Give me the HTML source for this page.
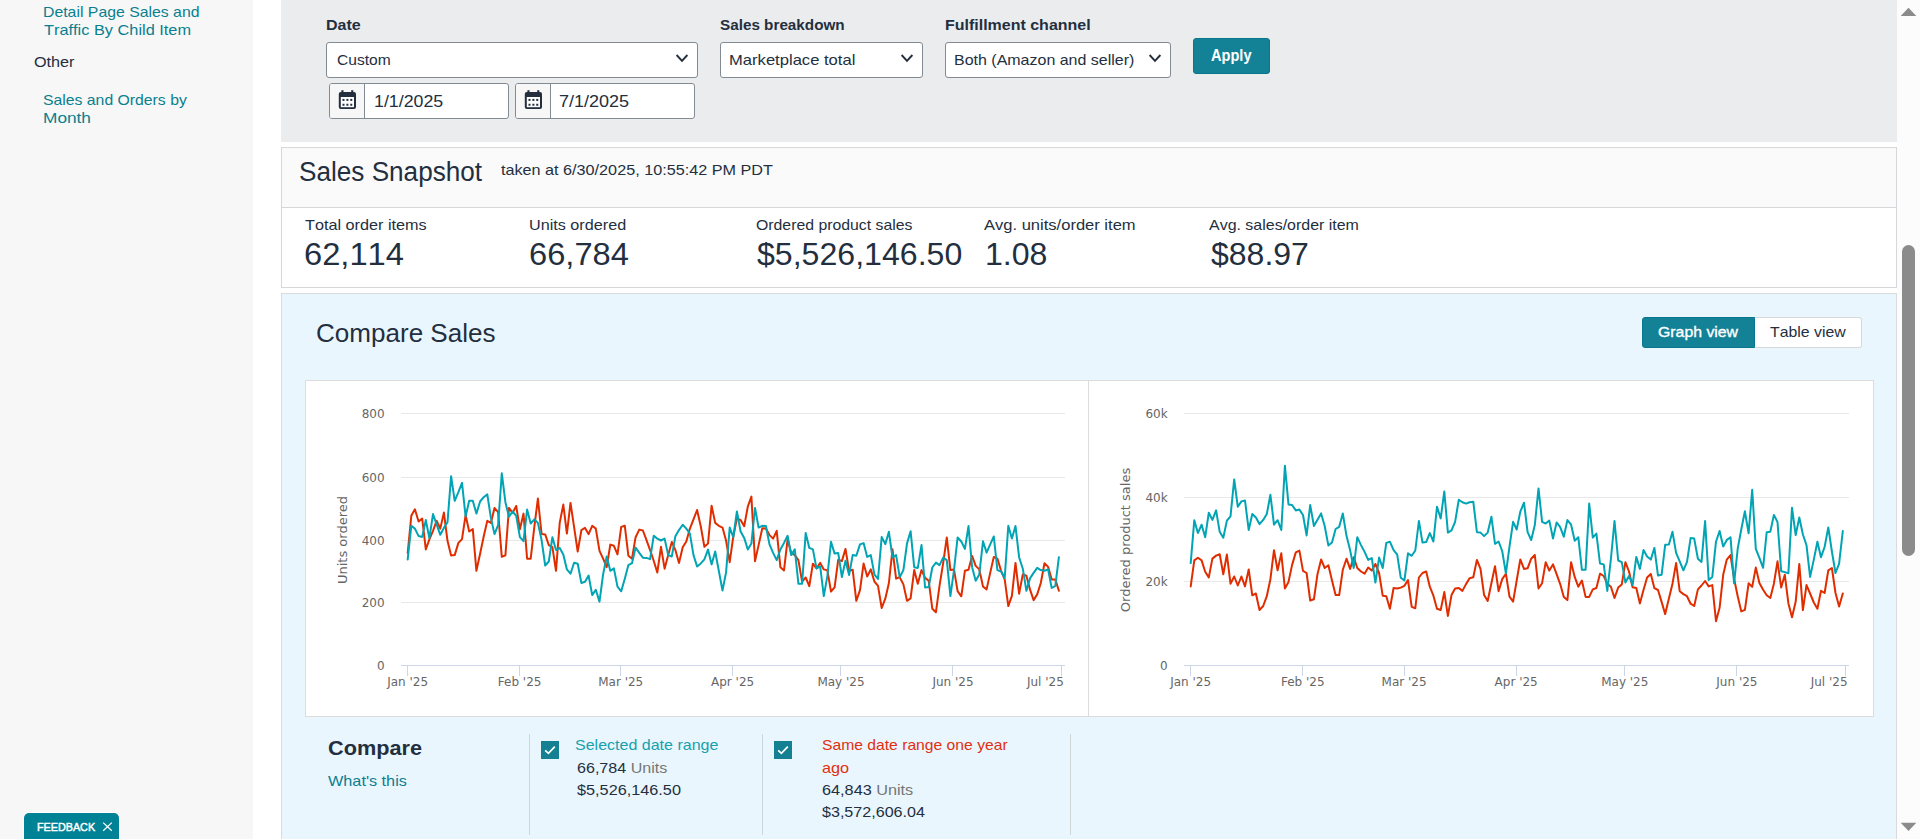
<!DOCTYPE html>
<html lang="en">
<head>
<meta charset="utf-8">
<title>Sales Dashboard</title>
<style>
*{box-sizing:border-box;margin:0;padding:0}
html,body{width:1920px;height:839px;overflow:hidden;background:#fff}
body{font-family:"Liberation Sans",sans-serif;color:#232f3e;font-size:15px;position:relative}
.t{position:absolute;white-space:nowrap;line-height:18px;font-size:15px;transform-origin:0 0;font-kerning:none}
#side{position:absolute;left:0;top:0;width:253px;height:839px;background:#f7f7f7}
.nav{color:#0a7f8f}
#filters{position:absolute;left:281px;top:0;width:1616px;height:141.6px;background:#ebecee}
.lbl{font-weight:bold;font-size:15.5px;margin-top:.6px}
.sel{position:absolute;top:42px;height:36px;background:#fff;border:1px solid #828b94;border-radius:3px}
.sel svg{position:absolute;right:7px;top:10px}
.dgrp{position:absolute;top:83px;height:36px;border:1px solid #828b94;border-radius:3px;background:#fff;overflow:hidden}
.dgrp .ic{position:absolute;left:0;top:0;width:35px;height:34px;background:#f7f7f7;border-right:1px solid #828b94}
.dgrp .ic svg{position:absolute;left:8px;top:6px}
#apply{position:absolute;left:1193px;top:38px;width:77px;height:36px;background:#148296;border:1px solid #06778c;border-radius:3px}
#snap{position:absolute;left:281px;top:147px;width:1616px;height:141px;border:1px solid #d5d7db;background:#fff}
#snaphd{position:absolute;left:0;top:0;width:1614px;height:60px;background:#fafafa;border-bottom:1px solid #d5d7db}
.mv{font-size:31px;line-height:38px}
#cmp{position:absolute;left:281px;top:293px;width:1616px;height:560px;border:1px solid #dadbdc;background:#eaf6fe}
#charts{position:absolute;left:305px;top:380px;width:1569px;height:337px;border:1px solid #dcdcdc;background:#fff}
#charts svg{position:absolute;left:-1px;top:-1px;display:block}
#tg1{position:absolute;left:1642px;top:317px;width:113px;height:31px;background:#148296;border:1px solid #06778c;border-radius:3px 0 0 3px}
#tg2{position:absolute;left:1755px;top:317px;width:107px;height:31px;background:#fff;border:1px solid #d5d9d9;border-left:0;border-radius:0 3px 3px 0}
.vd{position:absolute;top:734px;width:1px;height:101px;background:#cfd6da}
.cb{position:absolute;top:741px;width:18px;height:18px;background:#148092}
.cb svg{position:absolute;left:0;top:0}
#fb{position:absolute;left:24px;top:813px;width:95px;height:30px;background:#008296;border-radius:5px 5px 0 0;box-shadow:0 0 0 1px #fff}
#scroll{position:absolute;left:1897px;top:0;width:23px;height:839px;background:#fcfcfc}
#thumb{position:absolute;left:5px;top:245px;width:13px;height:310px;background:#8b8b8b;border-radius:7px}
.arr{position:absolute;left:6px;width:0;height:0;border-left:5.5px solid transparent;border-right:5.5px solid transparent}
</style>
</head>
<body>
<div id="side"></div>
<div id="filters"></div>
<div class="sel" style="left:326px;width:372px"><svg width="16" height="12" viewBox="0 0 16 12"><path d="M2.6 2 L8 7.9 L13.4 2" fill="none" stroke="#232f3e" stroke-width="1.9"/></svg></div>
<div class="sel" style="left:720px;width:203px"><svg width="16" height="12" viewBox="0 0 16 12"><path d="M2.6 2 L8 7.9 L13.4 2" fill="none" stroke="#232f3e" stroke-width="1.9"/></svg></div>
<div class="sel" style="left:945px;width:226px"><svg width="16" height="12" viewBox="0 0 16 12"><path d="M2.6 2 L8 7.9 L13.4 2" fill="none" stroke="#232f3e" stroke-width="1.9"/></svg></div>
<div class="dgrp" style="left:329px;width:180px"><div class="ic"><svg width="19" height="20" viewBox="0 0 19 20"><g fill="#232f3e"><rect x="3.4" y="0.2" width="2.1" height="3"/><rect x="13.2" y="0.2" width="2.1" height="3"/><rect x="0.8" y="2" width="17.2" height="17" rx="2"/></g><rect x="2.8" y="7" width="13.2" height="10.2" fill="#fff"/><g fill="#232f3e"><rect x="4.5" y="8.9" width="2" height="2"/><rect x="8.4" y="8.9" width="2" height="2"/><rect x="12.25" y="8.9" width="2" height="2"/><rect x="4.5" y="13.75" width="2" height="2"/><rect x="8.4" y="13.75" width="2" height="2"/><rect x="12.25" y="13.75" width="2" height="2"/></g></svg></div></div>
<div class="dgrp" style="left:515px;width:180px"><div class="ic"><svg width="19" height="20" viewBox="0 0 19 20"><g fill="#232f3e"><rect x="3.4" y="0.2" width="2.1" height="3"/><rect x="13.2" y="0.2" width="2.1" height="3"/><rect x="0.8" y="2" width="17.2" height="17" rx="2"/></g><rect x="2.8" y="7" width="13.2" height="10.2" fill="#fff"/><g fill="#232f3e"><rect x="4.5" y="8.9" width="2" height="2"/><rect x="8.4" y="8.9" width="2" height="2"/><rect x="12.25" y="8.9" width="2" height="2"/><rect x="4.5" y="13.75" width="2" height="2"/><rect x="8.4" y="13.75" width="2" height="2"/><rect x="12.25" y="13.75" width="2" height="2"/></g></svg></div></div>
<div id="apply"></div>
<div id="snap"><div id="snaphd"></div></div>
<div id="cmp"></div>
<div id="tg1"></div><div id="tg2"></div>
<div id="charts"><svg width="1569" height="337" viewBox="305 380 1569 337" style="font-family:'DejaVu Sans',sans-serif;font-size:12px;fill:#666666">
<rect x="401" y="413" width="664" height="1" fill="#e8e8e8"/>
<rect x="401" y="477" width="664" height="1" fill="#e8e8e8"/>
<rect x="401" y="540" width="664" height="1" fill="#e8e8e8"/>
<rect x="401" y="602" width="664" height="1" fill="#e8e8e8"/>
<rect x="401" y="665" width="664" height="1" fill="#ccd6eb"/>
<rect x="407" y="665" width="1" height="11" fill="#ccd6eb"/>
<text x="407.6" y="686" text-anchor="middle">Jan '25</text>
<rect x="519" y="665" width="1" height="11" fill="#ccd6eb"/>
<text x="519.6" y="686" text-anchor="middle">Feb '25</text>
<rect x="620" y="665" width="1" height="11" fill="#ccd6eb"/>
<text x="620.7" y="686" text-anchor="middle">Mar '25</text>
<rect x="732" y="665" width="1" height="11" fill="#ccd6eb"/>
<text x="732.6" y="686" text-anchor="middle">Apr '25</text>
<rect x="840" y="665" width="1" height="11" fill="#ccd6eb"/>
<text x="841.0" y="686" text-anchor="middle">May '25</text>
<rect x="952" y="665" width="1" height="11" fill="#ccd6eb"/>
<text x="953.0" y="686" text-anchor="middle">Jun '25</text>
<rect x="1061" y="665" width="1" height="11" fill="#ccd6eb"/>
<text x="1063.8" y="686" text-anchor="end">Jul '25</text>
<text x="384.6" y="417.8" text-anchor="end">800</text>
<text x="384.6" y="481.8" text-anchor="end">600</text>
<text x="384.6" y="544.8" text-anchor="end">400</text>
<text x="384.6" y="606.8" text-anchor="end">200</text>
<text x="384.6" y="669.8" text-anchor="end">0</text>
<text transform="translate(347.3,540) rotate(-90)" text-anchor="middle" style="font-size:13px">Units ordered</text>
<path d="M407.7 553.0 L411.3 515.8 L414.9 509.3 L418.6 521.5 L422.2 518.6 L425.8 549.4 L429.4 539.4 L433.0 530.8 L436.6 520.8 L440.3 528.6 L443.9 512.6 L447.5 540.8 L451.1 555.4 L454.7 555.1 L458.4 542.9 L462.0 539.1 L465.6 515.1 L469.2 531.5 L472.8 529.1 L476.4 570.8 L480.1 553.7 L483.7 536.5 L487.3 520.8 L490.9 522.9 L494.5 507.9 L498.1 512.2 L501.8 556.8 L505.4 555.4 L509.0 507.9 L512.6 512.9 L516.2 506.0 L519.9 529.3 L523.5 513.6 L527.1 558.7 L530.7 558.7 L534.3 527.2 L537.9 498.6 L541.6 534.1 L545.2 534.4 L548.8 545.1 L552.4 547.2 L556.0 570.8 L559.7 522.9 L563.3 504.6 L566.9 533.6 L570.5 502.9 L574.1 527.2 L577.7 551.5 L581.4 530.1 L585.0 527.9 L588.6 534.1 L592.2 525.8 L595.8 528.6 L599.5 550.8 L603.1 558.7 L606.7 567.2 L610.3 544.6 L613.9 545.8 L617.5 554.4 L621.2 526.9 L624.8 525.8 L628.4 555.8 L632.0 558.7 L635.6 537.2 L639.3 529.6 L642.9 530.5 L646.5 540.1 L650.1 550.1 L653.7 560.8 L657.3 572.5 L661.0 546.8 L664.6 568.7 L668.2 555.1 L671.8 541.9 L675.4 550.1 L679.0 562.9 L682.7 547.2 L686.3 541.5 L689.9 528.6 L693.5 519.3 L697.1 510.0 L700.8 526.5 L704.4 546.8 L708.0 543.6 L711.6 505.7 L715.2 522.9 L718.8 525.8 L722.5 527.6 L726.1 540.8 L729.7 562.2 L733.3 536.5 L736.9 518.6 L740.6 520.0 L744.2 526.2 L747.8 506.7 L751.4 496.6 L755.0 561.2 L758.6 545.1 L762.3 528.3 L765.9 528.6 L769.5 535.1 L773.1 538.6 L776.7 530.8 L780.4 567.2 L784.0 570.4 L787.6 539.3 L791.2 552.9 L794.8 555.1 L798.4 560.1 L802.1 581.5 L805.7 577.5 L809.3 586.1 L812.9 563.7 L816.5 568.4 L820.2 562.9 L823.8 569.4 L827.4 570.4 L831.0 591.5 L834.6 587.3 L838.2 559.8 L841.9 561.1 L845.5 548.9 L849.1 570.8 L852.7 569.8 L856.3 600.8 L860.0 590.1 L863.6 563.5 L867.2 576.5 L870.8 569.4 L874.4 581.5 L878.0 585.8 L881.7 608.0 L885.3 598.7 L888.9 583.0 L892.5 549.3 L896.1 578.7 L899.7 577.2 L903.4 584.4 L907.0 600.8 L910.6 598.4 L914.2 570.1 L917.8 583.7 L921.5 570.1 L925.1 577.9 L928.7 580.8 L932.3 608.7 L935.9 612.3 L939.5 585.8 L943.2 562.9 L946.8 537.5 L950.4 570.1 L954.0 569.4 L957.6 591.2 L961.3 596.3 L964.9 570.8 L968.5 569.8 L972.1 555.9 L975.7 565.9 L979.3 569.4 L983.0 586.5 L986.6 589.4 L990.2 572.9 L993.8 556.9 L997.4 558.6 L1001.1 570.8 L1004.7 579.4 L1008.3 606.1 L1011.9 595.8 L1015.5 562.9 L1019.1 593.7 L1022.8 574.4 L1026.4 575.8 L1030.0 589.4 L1033.6 600.1 L1037.2 594.4 L1040.8 583.0 L1044.5 563.2 L1048.1 566.9 L1051.7 579.4 L1055.3 579.4 L1058.9 590.8" fill="none" stroke="#e02d00" stroke-width="2" stroke-linejoin="round" stroke-linecap="round"/>
<path d="M407.7 559.4 L411.3 525.8 L414.9 528.6 L418.6 536.1 L422.2 536.9 L425.8 520.1 L429.4 538.2 L433.0 514.1 L436.6 524.4 L440.3 534.8 L443.9 527.9 L447.5 522.2 L451.1 476.2 L454.7 500.8 L458.4 492.2 L462.0 482.9 L465.6 516.5 L469.2 500.8 L472.8 500.8 L476.4 513.6 L480.1 501.5 L483.7 497.2 L487.3 494.3 L490.9 517.9 L494.5 534.1 L498.1 525.1 L501.8 473.3 L505.4 502.2 L509.0 516.8 L512.6 511.5 L516.2 515.8 L519.9 537.2 L523.5 541.2 L527.1 509.6 L530.7 523.6 L534.3 519.3 L537.9 522.9 L541.6 540.1 L545.2 565.5 L548.8 561.5 L552.4 537.2 L556.0 550.1 L559.7 547.9 L563.3 554.4 L566.9 569.4 L570.5 573.7 L574.1 562.7 L577.7 563.7 L581.4 583.0 L585.0 581.8 L588.6 575.5 L592.2 595.1 L595.8 589.8 L599.5 601.6 L603.1 574.4 L606.7 556.5 L610.3 570.8 L613.9 568.4 L617.5 586.6 L621.2 591.3 L624.8 578.7 L628.4 565.1 L632.0 563.2 L635.6 547.6 L639.3 552.9 L642.9 557.7 L646.5 557.9 L650.1 559.1 L653.7 535.8 L657.3 538.6 L661.0 540.5 L664.6 538.6 L668.2 555.1 L671.8 556.5 L675.4 536.2 L679.0 530.1 L682.7 524.8 L686.3 528.6 L689.9 533.6 L693.5 555.1 L697.1 566.5 L700.8 563.4 L704.4 559.4 L708.0 549.6 L711.6 564.4 L715.2 551.5 L718.8 570.8 L722.5 590.6 L726.1 572.2 L729.7 527.6 L733.3 537.2 L736.9 511.5 L740.6 531.5 L744.2 537.9 L747.8 549.5 L751.4 543.6 L755.0 507.9 L758.6 527.5 L762.3 525.8 L765.9 526.0 L769.5 544.4 L773.1 552.9 L776.7 560.1 L780.4 549.4 L784.0 542.9 L787.6 535.8 L791.2 555.1 L794.8 549.4 L798.4 583.7 L802.1 583.7 L805.7 532.9 L809.3 547.9 L812.9 549.4 L816.5 568.4 L820.2 566.5 L823.8 596.1 L827.4 575.8 L831.0 541.8 L834.6 553.6 L838.2 552.9 L841.9 577.0 L845.5 560.8 L849.1 575.1 L852.7 555.1 L856.3 555.8 L860.0 544.4 L863.6 543.1 L867.2 556.9 L870.8 555.1 L874.4 574.4 L878.0 579.0 L881.7 536.9 L885.3 544.1 L888.9 531.8 L892.5 557.5 L896.1 555.1 L899.7 577.2 L903.4 570.1 L907.0 543.6 L910.6 531.2 L914.2 567.2 L917.8 567.9 L921.5 545.1 L925.1 587.5 L928.7 587.0 L932.3 567.5 L935.9 562.6 L939.5 565.1 L943.2 557.6 L946.8 560.1 L950.4 596.1 L954.0 570.1 L957.6 537.5 L961.3 541.5 L964.9 548.9 L968.5 526.1 L972.1 567.2 L975.7 580.8 L979.3 574.4 L983.0 541.2 L986.6 552.6 L990.2 544.3 L993.8 536.5 L997.4 570.1 L1001.1 571.5 L1004.7 577.9 L1008.3 525.7 L1011.9 538.6 L1015.5 526.0 L1019.1 557.2 L1022.8 568.7 L1026.4 590.8 L1030.0 578.4 L1033.6 572.9 L1037.2 567.9 L1040.8 570.1 L1044.5 570.8 L1048.1 569.4 L1051.7 588.0 L1055.3 585.8 L1058.9 557.2" fill="none" stroke="#00a4b4" stroke-width="2" stroke-linejoin="round" stroke-linecap="round"/>
<rect x="1088" y="380" width="1" height="337" fill="#dcdcdc"/>
<rect x="1184" y="413" width="665" height="1" fill="#e8e8e8"/>
<rect x="1184" y="497" width="665" height="1" fill="#e8e8e8"/>
<rect x="1184" y="581" width="665" height="1" fill="#e8e8e8"/>
<rect x="1184" y="665" width="665" height="1" fill="#ccd6eb"/>
<rect x="1190" y="665" width="1" height="11" fill="#ccd6eb"/>
<text x="1190.6" y="686" text-anchor="middle">Jan '25</text>
<rect x="1302" y="665" width="1" height="11" fill="#ccd6eb"/>
<text x="1302.8" y="686" text-anchor="middle">Feb '25</text>
<rect x="1404" y="665" width="1" height="11" fill="#ccd6eb"/>
<text x="1404.1" y="686" text-anchor="middle">Mar '25</text>
<rect x="1516" y="665" width="1" height="11" fill="#ccd6eb"/>
<text x="1516.2" y="686" text-anchor="middle">Apr '25</text>
<rect x="1624" y="665" width="1" height="11" fill="#ccd6eb"/>
<text x="1624.8" y="686" text-anchor="middle">May '25</text>
<rect x="1736" y="665" width="1" height="11" fill="#ccd6eb"/>
<text x="1736.9" y="686" text-anchor="middle">Jun '25</text>
<rect x="1845" y="665" width="1" height="11" fill="#ccd6eb"/>
<text x="1847.6" y="686" text-anchor="end">Jul '25</text>
<text x="1167.6" y="417.8" text-anchor="end">60k</text>
<text x="1167.6" y="501.8" text-anchor="end">40k</text>
<text x="1167.6" y="585.8" text-anchor="end">20k</text>
<text x="1167.6" y="669.8" text-anchor="end">0</text>
<text transform="translate(1130.3,540) rotate(-90)" text-anchor="middle" style="font-size:13px">Ordered product sales</text>
<path d="M1190.7 586.4 L1194.3 560.4 L1197.9 557.8 L1201.6 560.4 L1205.2 571.7 L1208.8 577.4 L1212.4 558.6 L1216.1 555.6 L1219.7 554.2 L1223.3 574.2 L1226.9 554.5 L1230.5 583.7 L1234.2 576.5 L1237.8 585.5 L1241.4 576.5 L1245.0 586.4 L1248.7 569.4 L1252.3 595.3 L1255.9 593.5 L1259.5 610.0 L1263.2 606.0 L1266.8 596.2 L1270.4 579.2 L1274.0 550.2 L1277.6 570.3 L1281.3 553.3 L1284.9 588.5 L1288.5 581.9 L1292.1 564.9 L1295.8 552.4 L1299.4 550.6 L1303.0 570.9 L1306.6 573.0 L1310.2 600.5 L1313.9 599.3 L1317.5 574.2 L1321.1 559.4 L1324.7 568.0 L1328.4 565.3 L1332.0 580.5 L1335.6 595.1 L1339.2 595.1 L1342.8 569.8 L1346.5 558.7 L1350.1 568.9 L1353.7 557.2 L1357.3 568.0 L1361.0 571.5 L1364.6 573.7 L1368.2 567.6 L1371.8 570.6 L1375.4 564.0 L1379.1 573.0 L1382.7 595.7 L1386.3 596.2 L1389.9 608.7 L1393.6 588.0 L1397.2 588.5 L1400.8 587.6 L1404.4 585.8 L1408.0 580.1 L1411.7 606.9 L1415.3 608.2 L1418.9 577.5 L1422.5 573.0 L1426.2 571.5 L1429.8 586.7 L1433.4 595.7 L1437.0 608.7 L1440.7 610.0 L1444.3 592.1 L1447.9 615.9 L1451.5 595.1 L1455.1 588.5 L1458.8 588.0 L1462.4 590.9 L1466.0 584.1 L1469.6 578.3 L1473.3 577.3 L1476.9 559.9 L1480.5 568.9 L1484.1 595.1 L1487.7 601.0 L1491.4 583.2 L1495.0 566.2 L1498.6 591.2 L1502.2 579.1 L1505.9 573.7 L1509.5 596.6 L1513.1 601.6 L1516.7 580.5 L1520.3 559.4 L1524.0 568.9 L1527.6 568.3 L1531.2 558.7 L1534.8 555.0 L1538.5 588.5 L1542.1 583.2 L1545.7 562.2 L1549.3 570.6 L1553.0 564.4 L1556.6 574.2 L1560.2 584.1 L1563.8 596.9 L1567.4 600.1 L1571.1 562.2 L1574.7 576.9 L1578.3 586.7 L1581.9 580.5 L1585.6 596.9 L1589.2 596.9 L1592.8 589.4 L1596.4 588.0 L1600.0 573.7 L1603.7 576.0 L1607.3 583.7 L1610.9 586.7 L1614.5 598.0 L1618.2 587.6 L1621.8 584.4 L1625.4 562.2 L1629.0 571.5 L1632.6 587.3 L1636.3 588.0 L1639.9 603.4 L1643.5 590.1 L1647.1 577.4 L1650.8 573.9 L1654.4 588.2 L1658.0 590.0 L1661.6 601.9 L1665.2 614.1 L1668.9 598.4 L1672.5 583.7 L1676.1 563.1 L1679.7 591.2 L1683.4 594.1 L1687.0 596.2 L1690.6 603.7 L1694.2 606.0 L1697.9 589.4 L1701.5 585.5 L1705.1 581.0 L1708.7 586.4 L1712.3 585.1 L1716.0 621.2 L1719.6 607.8 L1723.2 574.8 L1726.8 559.6 L1730.5 555.1 L1734.1 578.8 L1737.7 596.2 L1741.3 611.4 L1744.9 609.9 L1748.6 583.3 L1752.2 586.9 L1755.8 567.6 L1759.4 583.1 L1763.1 589.7 L1766.7 595.3 L1770.3 598.0 L1773.9 583.7 L1777.5 561.3 L1781.2 587.6 L1784.8 574.8 L1788.4 603.4 L1792.0 617.3 L1795.7 601.6 L1799.3 564.0 L1802.9 610.2 L1806.5 585.1 L1810.1 593.5 L1813.8 602.5 L1817.4 608.7 L1821.0 590.8 L1824.6 593.0 L1828.3 570.3 L1831.9 568.0 L1835.5 593.0 L1839.1 606.6 L1842.8 593.5" fill="none" stroke="#e02d00" stroke-width="2" stroke-linejoin="round" stroke-linecap="round"/>
<path d="M1190.7 563.1 L1194.3 520.2 L1197.9 533.1 L1201.6 524.7 L1205.2 537.2 L1208.8 512.7 L1212.4 519.9 L1216.1 510.4 L1219.7 531.8 L1223.3 537.7 L1226.9 520.6 L1230.5 516.3 L1234.2 479.4 L1237.8 506.8 L1241.4 501.4 L1245.0 500.5 L1248.7 530.0 L1252.3 514.0 L1255.9 517.5 L1259.5 524.1 L1263.2 519.9 L1266.8 514.0 L1270.4 494.8 L1274.0 524.7 L1277.6 520.2 L1281.3 530.0 L1284.9 465.7 L1288.5 504.5 L1292.1 505.0 L1295.8 510.4 L1299.4 509.6 L1303.0 515.0 L1306.6 535.4 L1310.2 505.0 L1313.9 526.0 L1317.5 519.7 L1321.1 513.4 L1324.7 526.0 L1328.4 545.6 L1332.0 542.6 L1335.6 529.0 L1339.2 526.8 L1342.8 513.4 L1346.5 535.8 L1350.1 550.1 L1353.7 568.0 L1357.3 537.2 L1361.0 545.1 L1364.6 551.9 L1368.2 559.9 L1371.8 558.1 L1375.4 582.6 L1379.1 557.6 L1382.7 568.0 L1386.3 542.9 L1389.9 541.7 L1393.6 550.1 L1397.2 554.6 L1400.8 577.8 L1404.4 580.5 L1408.0 553.3 L1411.7 555.8 L1415.3 550.5 L1418.9 521.0 L1422.5 542.6 L1426.2 542.0 L1429.8 533.1 L1433.4 541.5 L1437.0 506.8 L1440.7 518.4 L1444.3 491.4 L1447.9 532.6 L1451.5 530.4 L1455.1 521.8 L1458.8 499.7 L1462.4 502.2 L1466.0 503.6 L1469.6 502.2 L1473.3 501.8 L1476.9 532.2 L1480.5 532.6 L1484.1 536.1 L1487.7 532.6 L1491.4 516.7 L1495.0 543.8 L1498.6 541.5 L1502.2 551.0 L1505.9 573.3 L1509.5 546.5 L1513.1 521.8 L1516.7 529.5 L1520.3 511.7 L1524.0 502.7 L1527.6 532.2 L1531.2 540.0 L1534.8 525.1 L1538.5 488.4 L1542.1 521.8 L1545.7 523.6 L1549.3 520.6 L1553.0 538.5 L1556.6 522.4 L1560.2 527.2 L1563.8 536.7 L1567.4 520.1 L1571.1 524.7 L1574.7 540.8 L1578.3 537.2 L1581.9 569.8 L1585.6 569.8 L1589.2 503.6 L1592.8 537.6 L1596.4 533.6 L1600.0 563.5 L1603.7 564.4 L1607.3 590.9 L1610.9 559.0 L1614.5 521.1 L1618.2 560.5 L1621.8 562.2 L1625.4 582.6 L1629.0 576.0 L1632.6 585.0 L1636.3 556.9 L1639.9 568.9 L1643.5 550.1 L1647.1 556.4 L1650.8 559.6 L1654.4 547.9 L1658.0 575.6 L1661.6 574.8 L1665.2 544.7 L1668.9 544.4 L1672.5 531.8 L1676.1 552.9 L1679.7 561.3 L1683.4 570.3 L1687.0 561.9 L1690.6 538.1 L1694.2 538.6 L1697.9 558.7 L1701.5 561.9 L1705.1 521.1 L1708.7 580.1 L1712.3 576.9 L1716.0 541.7 L1719.6 531.0 L1723.2 546.5 L1726.8 539.9 L1730.5 537.2 L1734.1 583.3 L1737.7 548.8 L1741.3 529.2 L1744.9 511.3 L1748.6 533.3 L1752.2 489.8 L1755.8 548.8 L1759.4 557.8 L1763.1 567.8 L1766.7 532.2 L1770.3 531.8 L1773.9 514.9 L1777.5 522.0 L1781.2 571.2 L1784.8 572.1 L1788.4 573.3 L1792.0 507.7 L1795.7 535.1 L1799.3 517.5 L1802.9 534.5 L1806.5 545.3 L1810.1 576.9 L1813.8 559.6 L1817.4 541.7 L1821.0 557.2 L1824.6 547.0 L1828.3 527.4 L1831.9 551.5 L1835.5 573.0 L1839.1 563.7 L1842.8 531.0" fill="none" stroke="#00a4b4" stroke-width="2" stroke-linejoin="round" stroke-linecap="round"/>
</svg></div>
<div class="vd" style="left:529px"></div><div class="vd" style="left:762px"></div><div class="vd" style="left:1070px"></div>
<div class="cb" style="left:541px"><svg width="18" height="18" viewBox="0 0 18 18"><path d="M4.2 9.3 L7.4 12.3 L13.8 5.6" fill="none" stroke="#fff" stroke-width="1.7"/></svg></div>
<div class="cb" style="left:774px"><svg width="18" height="18" viewBox="0 0 18 18"><path d="M4.2 9.3 L7.4 12.3 L13.8 5.6" fill="none" stroke="#fff" stroke-width="1.7"/></svg></div>
<div id="fb"></div>
<svg style="position:absolute;left:101px;top:820px" width="13" height="13" viewBox="0 0 13 13"><path d="M2.2 2.6 L10.8 10.7 M10.8 2.6 L2.2 10.7" stroke="#fff" stroke-width="1.25" fill="none"/></svg>
<div class="t nav" id="n1" style="left:43.20px;top:3.00px;transform:scaleX(1.0544);">Detail Page Sales and</div>
<div class="t nav" id="n2" style="left:44.00px;top:21.00px;transform:scaleX(1.0890);">Traffic By Child Item</div>
<div class="t" id="n3" style="left:34.40px;top:53.00px;transform:scaleX(1.0796);">Other</div>
<div class="t nav" id="n4" style="left:43.20px;top:91.00px;transform:scaleX(1.0516);">Sales and Orders by</div>
<div class="t nav" id="n5" style="left:43.20px;top:109.00px;transform:scaleX(1.1505);">Month</div>
<div class="t lbl" id="l1" style="left:325.80px;top:15.00px;transform:scaleX(1.0333);">Date</div>
<div class="t lbl" id="l2" style="left:720.30px;top:15.00px;transform:scaleX(0.9846);">Sales breakdown</div>
<div class="t lbl" id="l3" style="left:944.50px;top:15.00px;transform:scaleX(1.0311);">Fulfillment channel</div>
<div class="t" id="s1" style="left:337.00px;top:51.00px;transform:scaleX(1.0394);">Custom</div>
<div class="t" id="s2" style="left:729.40px;top:51.00px;transform:scaleX(1.1064);">Marketplace total</div>
<div class="t" id="s3" style="left:954.40px;top:51.00px;transform:scaleX(1.0655);">Both (Amazon and seller)</div>
<div class="t" id="d1" style="left:374.20px;top:93.00px;transform:scaleX(1.1113);font-size:16px">1/1/2025</div>
<div class="t" id="d2" style="left:559.20px;top:93.00px;transform:scaleX(1.1257);font-size:16px">7/1/2025</div>
<div class="t" id="ap" style="left:1211.00px;top:47.00px;transform:scaleX(0.9116);color:#fff;font-weight:bold;font-size:16px">Apply</div>
<div class="t" id="h1" style="left:299.20px;top:154.00px;transform:scaleX(0.9681);font-size:27px;line-height:36px">Sales Snapshot</div>
<div class="t" id="h1s" style="left:500.80px;top:161.40px;transform:scaleX(1.0794);">taken at 6/30/2025, 10:55:42 PM PDT</div>
<div class="t" id="ml1" style="left:305.40px;top:216.00px;transform:scaleX(1.0806);">Total order items</div>
<div class="t mv" id="mv1" style="left:304.20px;top:236.00px;transform:scaleX(1.0540);">62,114</div>
<div class="t" id="ml2" style="left:529.20px;top:216.00px;transform:scaleX(1.0787);">Units ordered</div>
<div class="t mv" id="mv2" style="left:529.20px;top:236.00px;transform:scaleX(1.0540);">66,784</div>
<div class="t" id="ml3" style="left:755.80px;top:216.00px;transform:scaleX(1.0542);">Ordered product sales</div>
<div class="t mv" id="mv3" style="left:756.80px;top:236.00px;transform:scaleX(1.0353);">$5,526,146.50</div>
<div class="t" id="ml4" style="left:984.00px;top:216.00px;transform:scaleX(1.1021);">Avg. units/order item</div>
<div class="t mv" id="mv4" style="left:985.20px;top:236.00px;transform:scaleX(1.0349);">1.08</div>
<div class="t" id="ml5" style="left:1209.00px;top:216.00px;transform:scaleX(1.0640);">Avg. sales/order item</div>
<div class="t mv" id="mv5" style="left:1210.80px;top:236.00px;transform:scaleX(1.0320);">$88.97</div>
<div class="t" id="h2" style="left:316.30px;top:316.00px;transform:scaleX(1.0018);font-size:26px;line-height:34px">Compare Sales</div>
<div class="t" id="tg1t" style="left:1658.00px;top:323.30px;transform:scaleX(1.0550);color:#fff;-webkit-text-stroke:.35px #fff">Graph view</div>
<div class="t" id="tg2t" style="left:1770.00px;top:323.30px;transform:scaleX(1.0556);">Table view</div>
<div class="t" id="c1" style="left:328.10px;top:736.00px;transform:scaleX(1.0330);font-size:21px;line-height:24px;font-weight:bold">Compare</div>
<div class="t nav" id="c2" style="left:328.00px;top:772.00px;transform:scaleX(1.0822);">What's this</div>
<div class="t" id="r1" style="left:575.20px;top:735.50px;transform:scaleX(1.0677);color:#17a0ad">Selected date range</div>
<div class="t" id="r2" style="left:576.80px;top:758.50px;transform:scaleX(1.0716);">66,784 <span style="color:#767676">Units</span></div>
<div class="t" id="r3" style="left:576.80px;top:780.50px;transform:scaleX(1.0836);">$5,526,146.50</div>
<div class="t" id="q1" style="left:822.10px;top:735.50px;transform:scaleX(1.0451);color:#e0300f">Same date range one year</div>
<div class="t" id="q2" style="left:822.00px;top:758.50px;transform:scaleX(1.0813);color:#e0300f">ago</div>
<div class="t" id="q3" style="left:822.00px;top:780.50px;transform:scaleX(1.0833);">64,843 <span style="color:#767676">Units</span></div>
<div class="t" id="q4" style="left:822.00px;top:802.50px;transform:scaleX(1.0729);">$3,572,606.04</div>
<div class="t" id="fbt" style="left:37.22px;top:817.70px;transform:scaleX(0.9372);color:#fff;font-size:11.5px;-webkit-text-stroke:.45px #fff">FEEDBACK</div>
<div id="scroll"><svg width="23" height="839" viewBox="1897 0 23 839" style="position:absolute;left:0;top:0"><polygon points="1908.5,7.8 1916.3,16 1900.7,16" fill="#8b8b8b"/><rect x="1902" y="245" width="13" height="311" rx="6.5" fill="#8b8b8b"/><polygon points="1900.7,822.8 1916.3,822.8 1908.5,831" fill="#8b8b8b"/></svg></div>
</body>
</html>
